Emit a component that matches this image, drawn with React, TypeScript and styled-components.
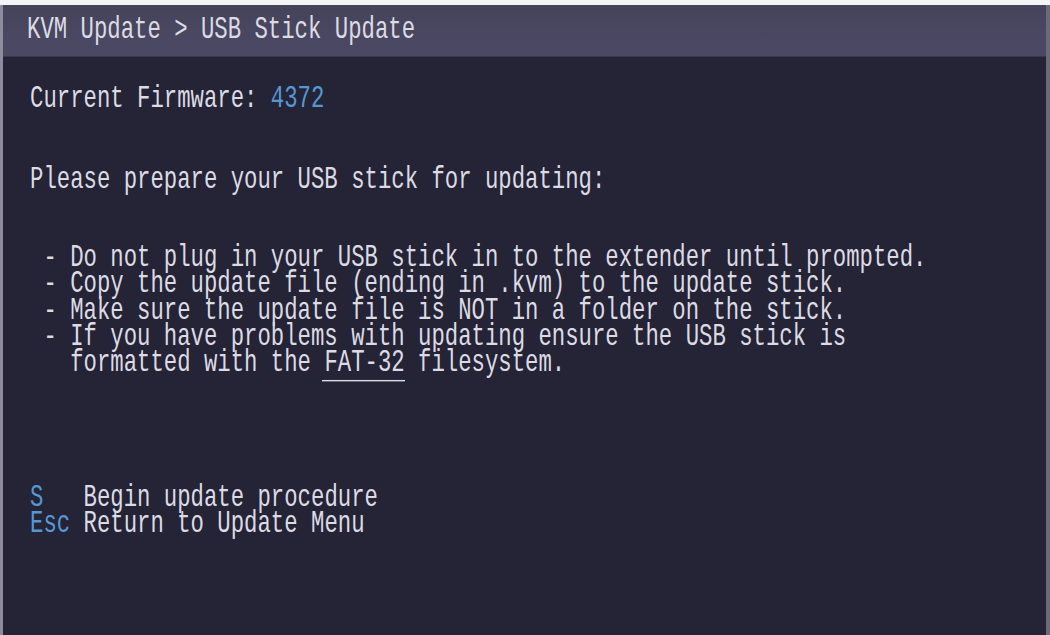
import React from "react";
import styled, { createGlobalStyle } from "styled-components";

const GlobalStyle = createGlobalStyle`
  html, body {
    margin: 0;
    padding: 0;
    background: #f4f4f6;
  }
  #root {
    width: 1050px;
    height: 635px;
  }
`;

const TEXT = "#dcdbe3";
const ACCENT = "#5597d3";

const Screen = styled.div`
  box-sizing: border-box;
  margin-top: 5px;
  width: 1050px;
  height: 630px;
  display: flex;
  flex-direction: column;
  border-left: 3px solid #8d8b9c;
  border-right: 4px solid #6b6a78;
  background: #252336;
  font-family: "Liberation Mono", "DejaVu Sans Mono", monospace;
  font-size: 22.3px;
  color: ${TEXT};
  overflow: hidden;
`;

const TitleBar = styled.header`
  height: 51px;
  flex: none;
  display: flex;
  align-items: center;
  padding: 0 24px;
  background: linear-gradient(#45425a, #4a4762 60%, #4b4863);
  border-bottom: 1px solid #3a384e;
`;

const Body = styled.main`
  flex: 1;
  display: flex;
  flex-direction: column;
  padding: 29px 27px 0;
`;

const Block = styled.div<{ $gap: number }>`
  display: flex;
  flex-direction: column;
  margin-top: ${(p) => p.$gap}px;
`;

/* one text row of the terminal: the glyphs are drawn tall and narrow */
const Row = styled.div`
  height: 26.4px;
  line-height: 26.4px;
  white-space: pre;
  transform: scaleY(1.42);
  transform-origin: 50% 50%;
`;

const Key = styled.span`
  color: ${ACCENT};
`;

const Value = styled.span`
  color: ${ACCENT};
`;

const Marked = styled.span`
  position: relative;
  &::after {
    content: "";
    position: absolute;
    left: -2px;
    right: 0;
    top: calc(50% + 11.6px);
    height: 1.5px;
    background: ${TEXT};
  }
`;

const steps: React.ReactNode[] = [
  " - Do not plug in your USB stick in to the extender until prompted.",
  " - Copy the update file (ending in .kvm) to the update stick.",
  " - Make sure the update file is NOT in a folder on the stick.",
  " - If you have problems with updating ensure the USB stick is",
  <>
    {"   formatted with the "}
    <Marked>FAT-32</Marked>
    {" filesystem."}
  </>,
];

const actions = [
  { key: "S  ", label: " Begin update procedure" },
  { key: "Esc", label: " Return to Update Menu" },
];

export default function App() {
  return (
    <>
      <GlobalStyle />
      <Screen>
        <TitleBar>
          <Row>KVM Update &gt; USB Stick Update</Row>
        </TitleBar>
        <Body>
          <Row>
            {"Current Firmware: "}
            <Value>4372</Value>
          </Row>
          <Block $gap={55}>
            <Row>Please prepare your USB stick for updating:</Row>
          </Block>
          <Block $gap={51}>
            {steps.map((s, i) => (
              <Row key={i}>{s}</Row>
            ))}
          </Block>
          <Block $gap={108}>
            {actions.map((a) => (
              <Row key={a.key}>
                <Key>{a.key}</Key>
                {a.label}
              </Row>
            ))}
          </Block>
        </Body>
      </Screen>
    </>
  );
}
